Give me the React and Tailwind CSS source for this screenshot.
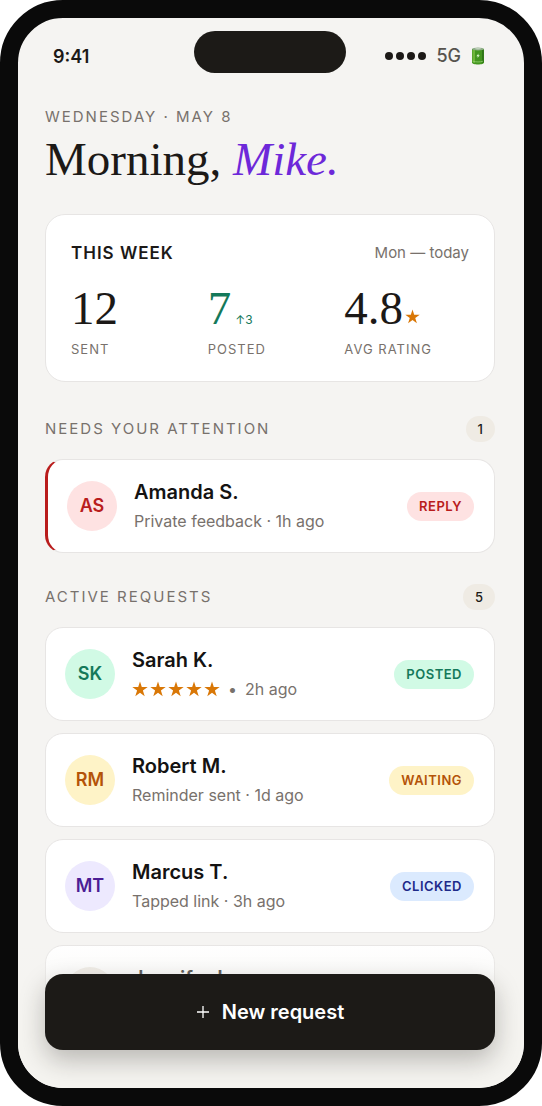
import { clsx } from 'clsx'

const STATUS_STYLE = {
  reply: { label: 'Reply', avatar: 'bg-[#fee2e2] text-[#b91c1c]', pill: 'bg-[#fee2e2] text-[#b91c1c]' },
  posted: { label: 'Posted', avatar: 'bg-[#d1fae5] text-[#14795a]', pill: 'bg-[#d1fae5] text-[#14795a]' },
  waiting: { label: 'Waiting', avatar: 'bg-[#fef3c7] text-[#b45309]', pill: 'bg-[#fef3c7] text-[#b45309]' },
  clicked: { label: 'Clicked', avatar: 'bg-[#ede9fe] text-[#4c1d95]', pill: 'bg-[#dbeafe] text-[#1e2a8a]' },
  sent: { label: 'Sent', avatar: 'bg-[#efebe4] text-[#57534e]', pill: 'bg-[#efebe4] text-[#57534e]' },
}

const attention = [
  { initials: 'AS', name: 'Amanda S.', detail: 'Private feedback · 1h ago', status: 'reply' },
]

const active = [
  { initials: 'SK', name: 'Sarah K.', rating: 5, detail: '2h ago', status: 'posted' },
  { initials: 'RM', name: 'Robert M.', detail: 'Reminder sent · 1d ago', status: 'waiting' },
  { initials: 'MT', name: 'Marcus T.', detail: 'Tapped link · 3h ago', status: 'clicked' },
  { initials: 'JL', name: 'Jennifer L.', detail: 'Sent · 4h ago', status: 'sent' },
]

export default function App() {
  return (
    <div className="h-screen bg-white font-['Inter',sans-serif] text-[#1c1917]">
      <div className="relative flex h-full flex-col overflow-hidden rounded-[63px] border-[18px] border-[#0a0a0a] bg-[#f5f4f2]">
        <StatusBar />

        <main className="flex-1 overflow-hidden pt-[34px] pr-[29px] pl-[27px]">
          <p className="text-[15px] leading-5 tracking-[2px] text-[#78716c] uppercase">Wednesday · May 8</p>
          <h1 className="font-['Liberation_Serif',serif] text-[47px] leading-[64px]">
            Morning, <em className="text-[#6d28d9]">Mike.</em>
          </h1>

          <WeekCard />

          <Section title="Needs your attention" count={1} className="mt-[34px]">
            {attention.map(r => <RequestRow key={r.initials} {...r} urgent />)}
          </Section>

          <Section title="Active requests" count={5} className="mt-[31px]">
            {active.map(r => <RequestRow key={r.initials} {...r} />)}
          </Section>
        </main>

        {/* Sticky action, fades the list out underneath */}
        <div className="absolute inset-x-0 bottom-0 bg-linear-to-t from-[#f5f4f0] from-40% to-transparent pt-8 pr-[29px] pb-[38px] pl-[27px]">
          <button
            type="button"
            className="flex h-[76px] w-full items-center justify-center gap-3 rounded-[18px] bg-[#1c1a17] text-xl font-semibold text-white shadow-[0_10px_26px_rgba(28,25,23,0.28)]"
          >
            <svg viewBox="0 0 14 14" className="size-[14px]" stroke="currentColor" strokeWidth="1.3" aria-hidden="true">
              <path d="M7 1v12M1 7h12" />
            </svg>
            New request
          </button>
        </div>
      </div>
    </div>
  )
}

function StatusBar() {
  return (
    <header className="grid shrink-0 grid-cols-[1fr_152px_1fr] items-center pt-[13px] pr-[37px] pl-[35px]">
      <span className="pt-[10px] text-lg leading-6 font-semibold">9:41</span>
      <span className="h-[42px] rounded-full bg-[#1c1a17]" />
      <div className="flex items-center justify-end gap-[10px] pt-2 pr-[2px]">
        <span className="flex gap-[3px]">
          {[0, 1, 2, 3].map(i => <i key={i} className="size-2 rounded-full bg-[#1c1917]" />)}
        </span>
        <span className="text-lg leading-6 font-medium text-[#57534e]">5G</span>
        <Battery />
      </div>
    </header>
  )
}

function Battery() {
  return (
    <svg viewBox="0 0 14 18" className="h-[18px] w-[14px]" aria-hidden="true">
      <path d="M1 2v13.500c0 1.200 2.700 2 6 2s6-.8 6-2V2z" fill="#43951f" />
      <path d="M1.500 3v12c.7.6 1.500.9 2.500 1.100V3z" fill="#6fb53b" />
      <path d="M11 3v13c.8-.2 1.400-.5 1.800-.9V3z" fill="#2f7518" />
      <path d="M2 14.200c3 1 7 1 10 0" fill="none" stroke="#8fcf6c" strokeWidth=".8" />
      <ellipse cx="7" cy="2" rx="6" ry="1.500" fill="#8fae88" />
      <ellipse cx="7" cy="1.800" rx="3" ry=".7" fill="#c4d3c0" />
      <path d="M7.500 6.500 5.400 9.200h1.400L6.500 11l2.200-2.700H7.300z" fill="#e3f7d2" />
    </svg>
  )
}

function WeekCard() {
  return (
    <section className="mt-[23px] rounded-[20px] border border-[#e7e5e4] bg-white px-[25px] pt-[26px] pb-[22px]">
      <div className="flex items-center justify-between">
        <h2 className="text-[17px] leading-6 font-semibold tracking-[1px] uppercase">This week</h2>
        <span className="text-[15px] leading-6 text-[#78716c]">Mon — today</span>
      </div>
      <div className="mt-[21px] grid grid-cols-3 gap-3">
        <Stat value="12" label="Sent" />
        <Stat value="7" label="Posted" className="text-[#14795a]">
          <span className="ml-1 text-xs">↑3</span>
        </Stat>
        <Stat value="4.8" label="Avg rating">
          <Star className="ml-[2px] size-[15px]" />
        </Stat>
      </div>
    </section>
  )
}

function Stat({ value, label, className, children }) {
  return (
    <div>
      <div className={clsx('flex h-11 items-baseline', className)}>
        <span className="font-['Liberation_Serif',serif] text-[47px] leading-[44px]">{value}</span>
        {children}
      </div>
      <div className="mt-[9px] text-[13px] leading-5 tracking-[1px] whitespace-nowrap text-[#78716c] uppercase">{label}</div>
    </div>
  )
}

function Section({ title, count, className, children }) {
  return (
    <section className={className}>
      <div className="flex items-center justify-between">
        <h2 className="text-[15px] leading-6 tracking-[2px] text-[#78716c] uppercase">{title}</h2>
        <span className="rounded-full bg-[#efebe4] px-3 text-[13px] leading-[26px] font-medium">{count}</span>
      </div>
      <div className="mt-[17px] flex flex-col gap-3">{children}</div>
    </section>
  )
}

function RequestRow({ initials, name, detail, rating, status, urgent }) {
  const style = STATUS_STYLE[status]
  return (
    <article
      className={clsx(
        'flex h-[94px] shrink-0 items-center rounded-[18px] border border-[#e7e5e4] bg-white pr-5 pl-[19px]',
        urgent && 'border-l-3 border-l-[#b91c1c]'
      )}
    >
      <div className={clsx('grid size-[50px] shrink-0 place-items-center rounded-full text-lg font-semibold', style.avatar)}>
        {initials}
      </div>
      <div className="ml-[17px] min-w-0 flex-1 pb-[2px]">
        <h3 className="text-xl leading-8 font-semibold text-[#141312]">{name}</h3>
        <div className="flex items-center text-base leading-[26px] text-[#78716c]">
          {rating && (
            <>
              <span className="flex gap-[2px]" role="img" aria-label={`${rating} stars`}>
                {Array.from({ length: rating }, (_, i) => <Star key={i} className="size-4" />)}
              </span>
              <span className="mx-2">•</span>
            </>
          )}
          {detail}
        </div>
      </div>
      <span className={clsx('rounded-full px-3 text-[13px] leading-[29px] font-semibold tracking-[0.5px] uppercase', style.pill)}>
        {style.label}
      </span>
    </article>
  )
}

function Star({ className }) {
  return (
    <svg viewBox="0 0 16 16" className={className} fill="#d97706" aria-hidden="true">
      <path d="M8 .5 9.800 6.100h5.900l-4.800 3.400 1.800 5.700L8 11.700l-4.700 3.500 1.800-5.700L.3 6.100h5.900z" />
    </svg>
  )
}
